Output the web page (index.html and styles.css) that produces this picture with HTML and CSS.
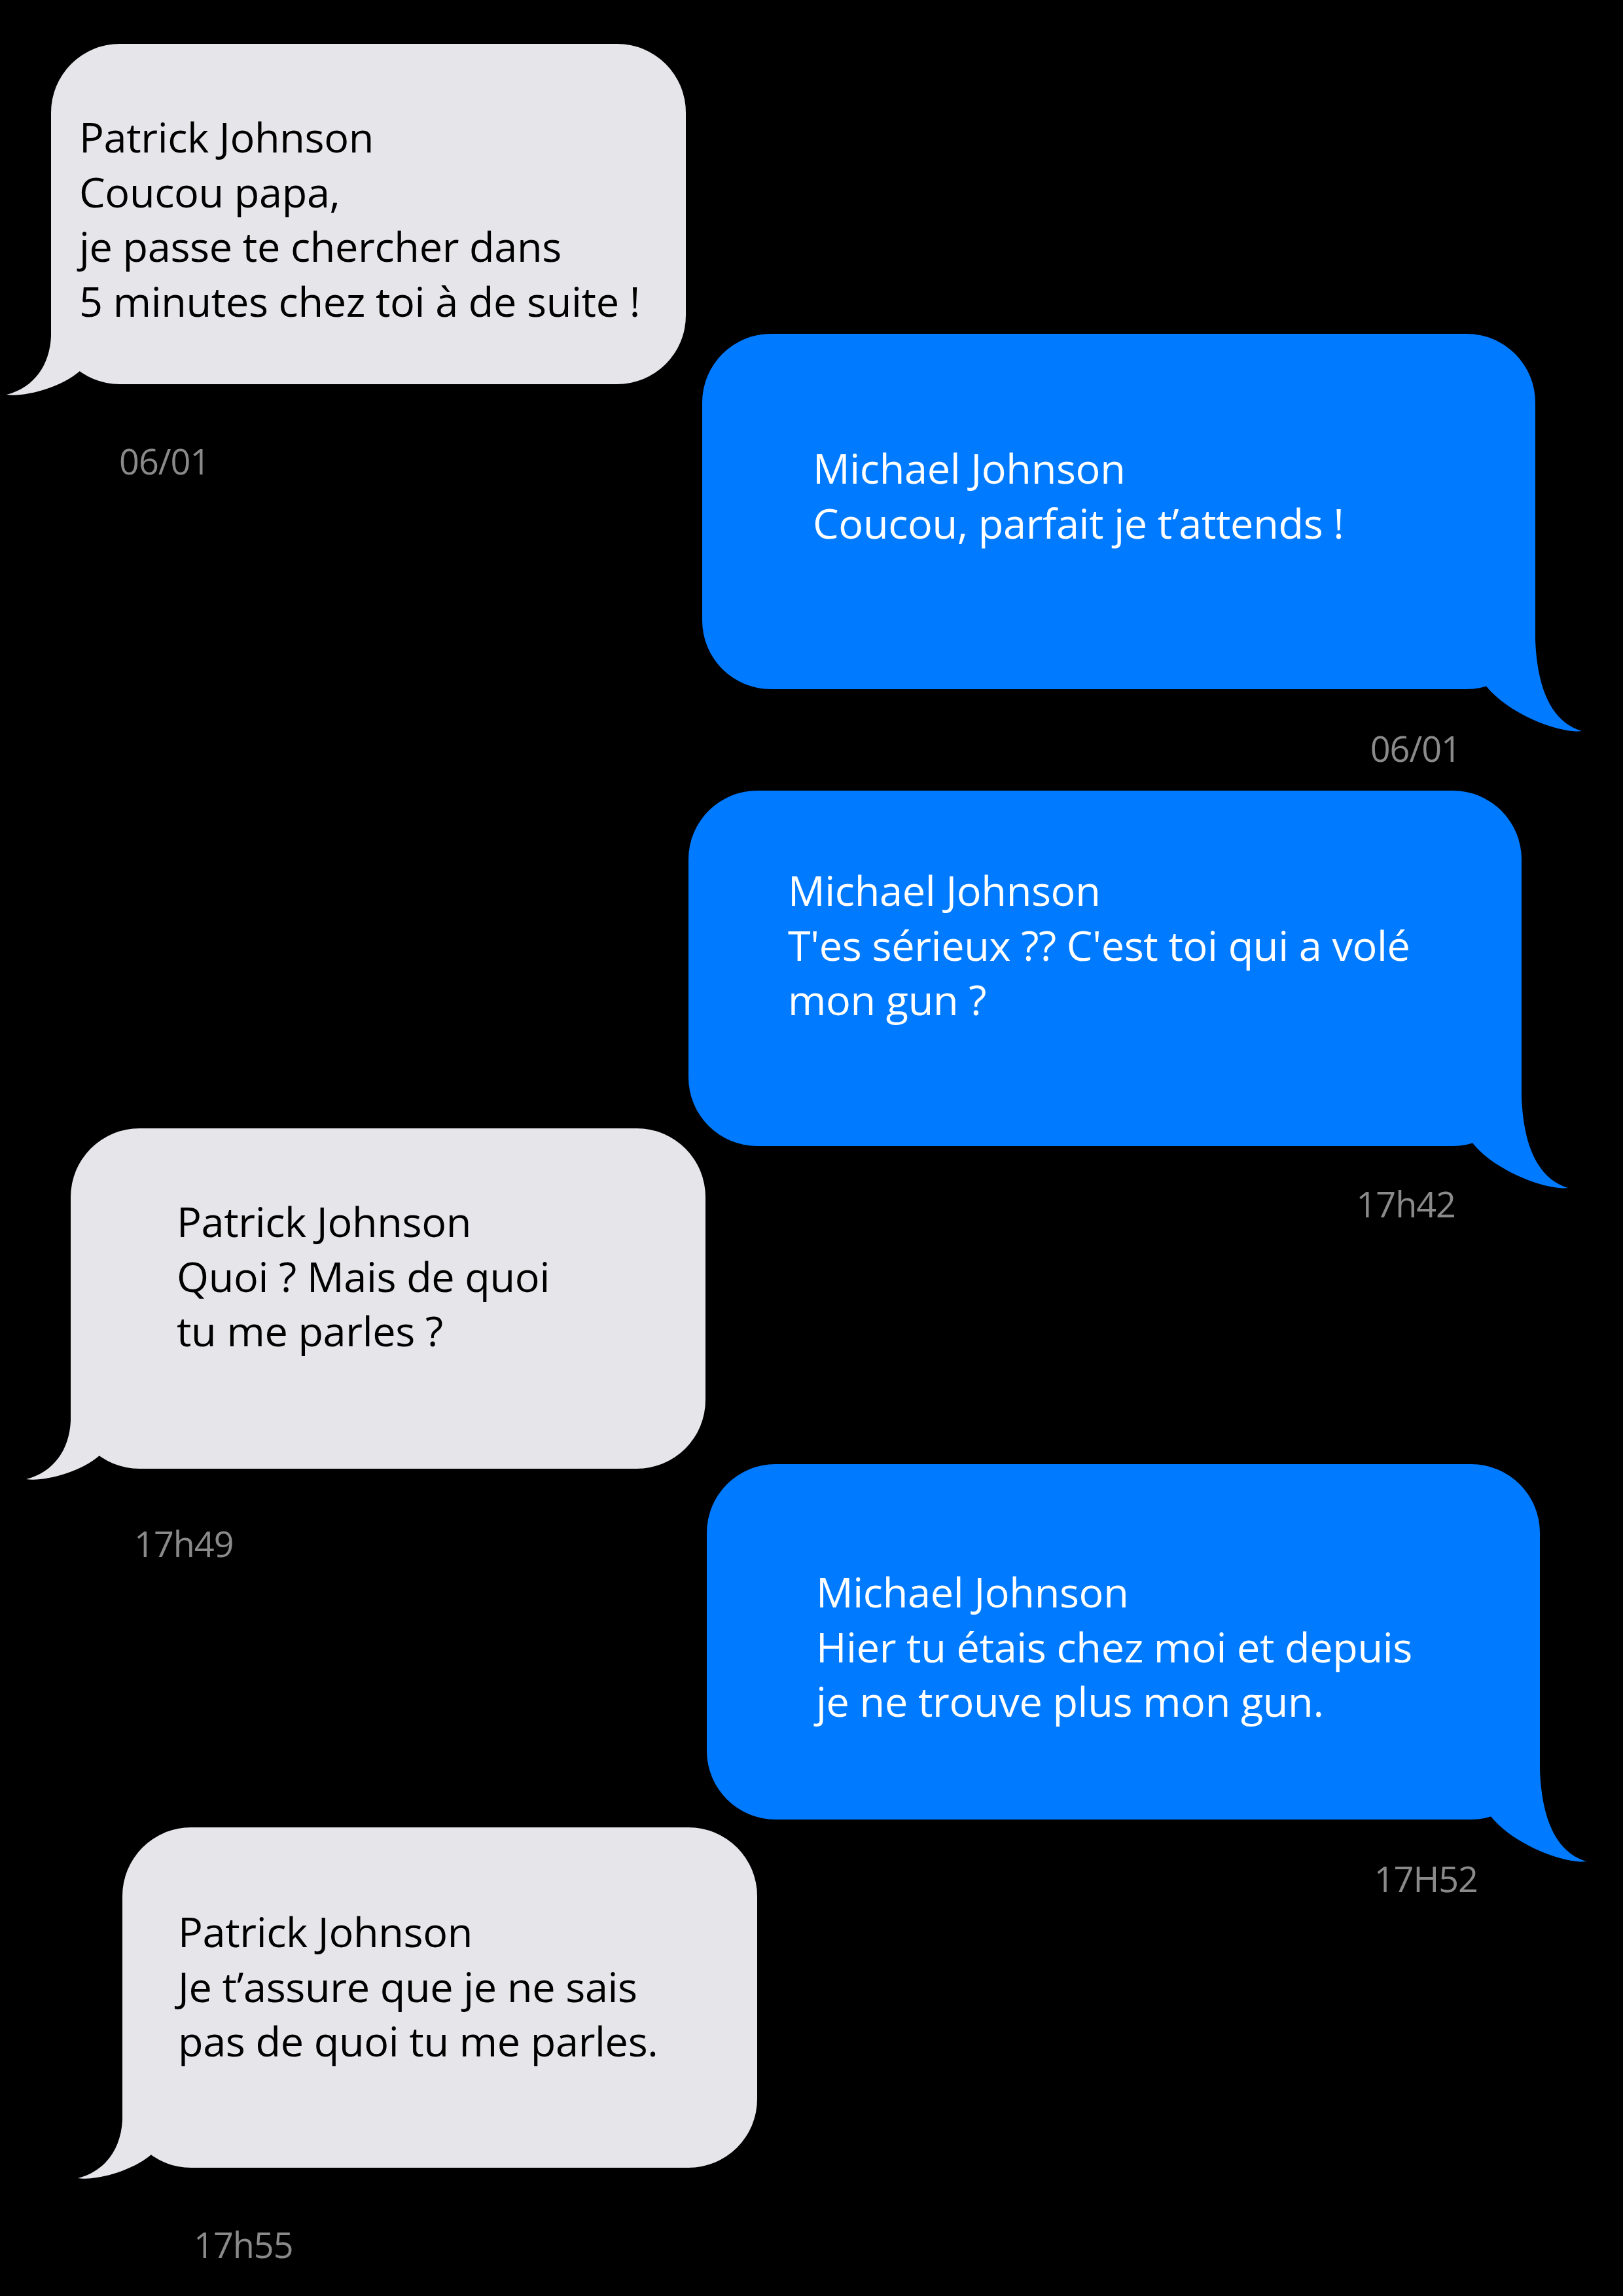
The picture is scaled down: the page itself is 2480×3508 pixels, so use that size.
FILE: index.html
```html
<!DOCTYPE html>
<html lang="fr">
<head>
<meta charset="utf-8">
<title>Messages</title>
<link rel="stylesheet" href="styles.css">
</head>
<body>
<main class="chat">
  <div class="msg in m1">
    <div class="bubble">
      <p class="txt">Patrick Johnson<br>Coucou papa,<br>je passe te chercher dans<br>5 minutes chez toi à de suite !</p>
      <svg class="tail" viewBox="-80 -170 200 200" aria-hidden="true"><path d="M0 -150 L0 -73 C-2 -30 -25 5 -68 16 C-40 20 15 5 44 -20 L90 -150 Z"/></svg>
    </div>
    <div class="time">06/01</div>
  </div>

  <div class="msg out m2">
    <div class="bubble">
      <p class="txt">Michael Johnson<br>Coucou, parfait je t’attends !</p>
      <svg class="tail" viewBox="-120 -170 200 200" aria-hidden="true"><path d="M0 -150 L0 -75 C3 0 25 50 71 64 C40 68 -40 40 -76 -6 L-100 -150 Z"/></svg>
    </div>
    <div class="time">06/01</div>
  </div>

  <div class="msg out m3">
    <div class="bubble">
      <p class="txt">Michael Johnson<br>T'es sérieux ?? C'est toi qui a volé<br>mon gun ?</p>
      <svg class="tail" viewBox="-120 -170 200 200" aria-hidden="true"><path d="M0 -150 L0 -75 C3 0 25 50 71 64 C40 68 -40 40 -76 -6 L-100 -150 Z"/></svg>
    </div>
    <div class="time">17h42</div>
  </div>

  <div class="msg in m4">
    <div class="bubble">
      <p class="txt">Patrick Johnson<br>Quoi ? Mais de quoi<br>tu me parles ?</p>
      <svg class="tail" viewBox="-80 -170 200 200" aria-hidden="true"><path d="M0 -150 L0 -73 C-2 -30 -25 5 -68 16 C-40 20 15 5 44 -20 L90 -150 Z"/></svg>
    </div>
    <div class="time">17h49</div>
  </div>

  <div class="msg out m5">
    <div class="bubble">
      <p class="txt">Michael Johnson<br>Hier tu étais chez moi et depuis<br>je ne trouve plus mon gun.</p>
      <svg class="tail" viewBox="-120 -170 200 200" aria-hidden="true"><path d="M0 -150 L0 -75 C3 0 25 50 71 64 C40 68 -40 40 -76 -6 L-100 -150 Z"/></svg>
    </div>
    <div class="time">17H52</div>
  </div>

  <div class="msg in m6">
    <div class="bubble">
      <p class="txt">Patrick Johnson<br>Je t’assure que je ne sais<br>pas de quoi tu me parles.</p>
      <svg class="tail" viewBox="-80 -170 200 200" aria-hidden="true"><path d="M0 -150 L0 -73 C-2 -30 -25 5 -68 16 C-40 20 15 5 44 -20 L90 -150 Z"/></svg>
    </div>
    <div class="time">17h55</div>
  </div>
</main>
</body>
</html>
```

FILE: styles.css
```css
html, body {
  margin: 0;
  padding: 0;
  background: #000;
}

body {
  width: 2480px;
  height: 3508px;
  overflow: hidden;
  font-family: "Open Sans", "Noto Sans", "DejaVu Sans", sans-serif;
}

.chat {
  display: flex;
  flex-direction: column;
  align-items: flex-start;
}

.msg {
  display: flex;
  flex-direction: column;
}

.bubble {
  position: relative;
  box-sizing: border-box;
  border-radius: 105px;
}

.txt {
  position: relative;
  z-index: 1;
  margin: 0;
  font-size: 63px;
  line-height: 83.5px;
  letter-spacing: -0.35px;
  white-space: nowrap;
}

.tail {
  position: absolute;
  bottom: -30px;
  width: 200px;
  height: 200px;
  overflow: visible;
}

.in .bubble {
  width: 970px;
  height: 520px;
  background: #e5e5ea;
  color: #000;
}

.in .tail {
  left: -80px;
  fill: #e5e5ea;
}

.out .bubble {
  width: 1273px;
  height: 543px;
  background: #007aff;
  color: #fff;
}

.out .tail {
  right: -80px;
  fill: #007aff;
}

.time {
  font-size: 54px;
  line-height: 54px;
  height: 54px;
  letter-spacing: -1px;
  color: #8a8a8a;
}

.out .time {
  text-align: right;
}

/* individual message placement */
.m1 { margin: 67px 0 0 78px; }
.m1 .bubble { padding: 100px 0 0 43px; }
.m1 .time { margin-top: 90px; padding-left: 104px; }

.m2 { margin: -221px 0 0 1073px; }
.m2 .bubble { padding: 163px 0 0 169px; }
.m2 .time { margin-top: 63px; padding-right: 114px; }

.m3 { margin: 38px 0 0 1052px; }
.m3 .bubble { padding: 110px 0 0 152px; }
.m3 .time { margin-top: 61px; padding-right: 101px; }

.m4 { margin: -142px 0 0 108px; }
.m4 .bubble { padding: 100px 0 0 162px; }
.m4 .time { margin-top: 87px; padding-left: 97px; }

.m5 { margin: -148px 0 0 1080px; }
.m5 .bubble { padding: 153px 0 0 167px; }
.m5 .time { margin-top: 63px; padding-right: 95px; }

.m6 { margin: -105px 0 0 187px; }
.m6 .bubble { padding: 117px 0 0 85px; }
.m6 .time { margin-top: 90px; padding-left: 109px; }
```
